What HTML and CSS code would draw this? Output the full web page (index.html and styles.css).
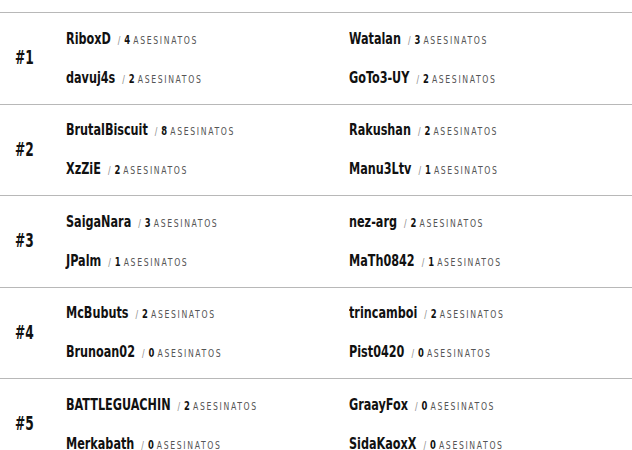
FILE: index.html
```html
<!DOCTYPE html>
<html lang="es">
<head>
<meta charset="utf-8">
<title>Ranking</title>
<link rel="stylesheet" href="styles.css">
</head>
<body>
<div class="board">
  <div class="row">
    <div class="rank"><span class="rank-text">#1</span></div>
    <div class="col">
      <div class="player"><span class="name">RiboxD</span><span class="sep">/</span><span class="kills">4</span><span class="label">ASESINATOS</span></div>
      <div class="player"><span class="name">davuj4s</span><span class="sep">/</span><span class="kills">2</span><span class="label">ASESINATOS</span></div>
    </div>
    <div class="col">
      <div class="player"><span class="name">Watalan</span><span class="sep">/</span><span class="kills">3</span><span class="label">ASESINATOS</span></div>
      <div class="player"><span class="name">GoTo3-UY</span><span class="sep">/</span><span class="kills">2</span><span class="label">ASESINATOS</span></div>
    </div>
  </div>
  <div class="row">
    <div class="rank"><span class="rank-text">#2</span></div>
    <div class="col">
      <div class="player"><span class="name">BrutalBiscuit</span><span class="sep">/</span><span class="kills">8</span><span class="label">ASESINATOS</span></div>
      <div class="player"><span class="name">XzZiE</span><span class="sep">/</span><span class="kills">2</span><span class="label">ASESINATOS</span></div>
    </div>
    <div class="col">
      <div class="player"><span class="name">Rakushan</span><span class="sep">/</span><span class="kills">2</span><span class="label">ASESINATOS</span></div>
      <div class="player"><span class="name">Manu3Ltv</span><span class="sep">/</span><span class="kills">1</span><span class="label">ASESINATOS</span></div>
    </div>
  </div>
  <div class="row">
    <div class="rank"><span class="rank-text">#3</span></div>
    <div class="col">
      <div class="player"><span class="name">SaigaNara</span><span class="sep">/</span><span class="kills">3</span><span class="label">ASESINATOS</span></div>
      <div class="player"><span class="name">JPalm</span><span class="sep">/</span><span class="kills">1</span><span class="label">ASESINATOS</span></div>
    </div>
    <div class="col">
      <div class="player"><span class="name">nez-arg</span><span class="sep">/</span><span class="kills">2</span><span class="label">ASESINATOS</span></div>
      <div class="player"><span class="name">MaTh0842</span><span class="sep">/</span><span class="kills">1</span><span class="label">ASESINATOS</span></div>
    </div>
  </div>
  <div class="row">
    <div class="rank"><span class="rank-text">#4</span></div>
    <div class="col">
      <div class="player"><span class="name">McBubuts</span><span class="sep">/</span><span class="kills">2</span><span class="label">ASESINATOS</span></div>
      <div class="player"><span class="name">Brunoan02</span><span class="sep">/</span><span class="kills">0</span><span class="label">ASESINATOS</span></div>
    </div>
    <div class="col">
      <div class="player"><span class="name">trincamboi</span><span class="sep">/</span><span class="kills">2</span><span class="label">ASESINATOS</span></div>
      <div class="player"><span class="name">Pist0420</span><span class="sep">/</span><span class="kills">0</span><span class="label">ASESINATOS</span></div>
    </div>
  </div>
  <div class="row">
    <div class="rank"><span class="rank-text">#5</span></div>
    <div class="col">
      <div class="player"><span class="name">BATTLEGUACHIN</span><span class="sep">/</span><span class="kills">2</span><span class="label">ASESINATOS</span></div>
      <div class="player"><span class="name">Merkabath</span><span class="sep">/</span><span class="kills">0</span><span class="label">ASESINATOS</span></div>
    </div>
    <div class="col">
      <div class="player"><span class="name">GraayFox</span><span class="sep">/</span><span class="kills">0</span><span class="label">ASESINATOS</span></div>
      <div class="player"><span class="name">SidaKaoxX</span><span class="sep">/</span><span class="kills">0</span><span class="label">ASESINATOS</span></div>
    </div>
  </div>
</div>
</body>
</html>
```

FILE: styles.css
```css
html, body {
  margin: 0;
  padding: 0;
  background: #ffffff;
}

body {
  font-family: "DejaVu Sans Condensed", "DejaVu Sans", sans-serif;
  color: #111;
}

.board {
  padding-top: 12px;
}

.row {
  display: grid;
  grid-template-columns: 66px 283px 1fr;
  align-items: center;
  height: 91.5px;
  border-top: 1px solid #b8b8b8;
  box-sizing: border-box;
}

.rank {
  padding-left: 15px;
  line-height: 20px;
}

.rank-text {
  display: inline-block;
  font-size: 20px;
  font-weight: 700;
  color: #111;
  transform: scaleX(0.68);
  transform-origin: left center;
}

.col {
  display: flex;
  flex-direction: column;
  gap: 19px;
}

.player {
  display: flex;
  align-items: baseline;
  height: 20px;
  line-height: 20px;
  white-space: nowrap;
  transform: scaleX(0.78);
  transform-origin: left center;
}

.name {
  font-size: 16px;
  font-weight: 700;
  color: #111;
}

.sep {
  margin-left: 9px;
  font-size: 11px;
  color: #888;
}

.kills {
  margin-left: 5px;
  font-size: 12px;
  font-weight: 700;
  color: #111;
}

.label {
  margin-left: 4px;
  font-size: 11px;
  color: #555;
  letter-spacing: 2.1px;
}
```
